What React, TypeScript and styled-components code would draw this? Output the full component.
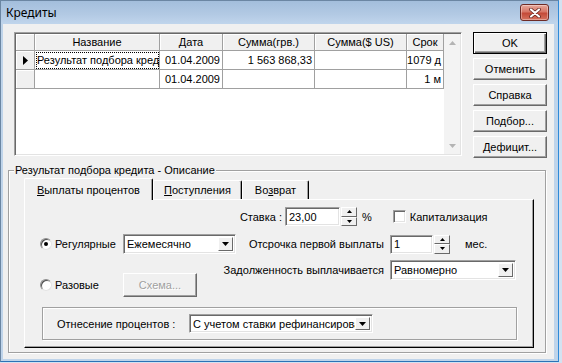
import styled, { createGlobalStyle } from "styled-components";

const GlobalStyle = createGlobalStyle`
	html, body {
		margin: 0;
		padding: 0;
	}
	body {
		background: #d3e2f1;
		font-family: "Liberation Sans", Arial, sans-serif;
		font-size: 11px;
		color: #000;
	}
`;

const Window = styled.div`
	width: 559px;
	height: 362px;
	box-sizing: border-box;
	display: flex;
	flex-direction: column;
	background: #bfd4ea;
	border: 1px solid #6b86a3;
	border-right-color: #2f8ad8;
	border-bottom-color: #2b72b5;
`;

const TitleBar = styled.div`
	height: 23px;
	display: flex;
	align-items: center;
	padding-left: 5px;
	background: linear-gradient(180deg, #a3bedc 0%, #b3cae4 60%, #c0d5ec 100%);
`;

const Title = styled.span`
	font-family: "Noto Sans", "Liberation Sans", sans-serif;
	font-size: 12px;
	color: #000;
`;

const CloseButton = styled.div`
	margin-left: auto;
	margin-right: 9px;
	width: 29px;
	height: 17px;
	box-sizing: border-box;
	border: 1px solid #6e2b25;
	border-radius: 3px;
	background: linear-gradient(180deg, #e7a99c 0%, #d77666 45%, #c44a38 55%, #d6735f 100%);
	box-shadow: inset 0 0 0 1px rgba(255, 255, 255, 0.35);
	display: flex;
	align-items: center;
	justify-content: center;
`;

const Client = styled.div`
	flex: 1;
	margin: 0 4px 2px 2px;
	background: #f0f0f0;
	display: flex;
	flex-direction: column;
`;

const TopSection = styled.div`
	display: flex;
	gap: 11px;
	padding: 8px 0 0 11px;
`;

const GridBox = styled.div`
	width: 448px;
	height: 124px;
	box-sizing: border-box;
	padding: 1px;
	display: flex;
	background: #fff;
	border: 1px solid;
	border-color: #a0a0a0 #fff #fff #a0a0a0;
	box-shadow: inset 1px 1px 0 #696969, inset -1px -1px 0 #e3e3e3;
`;

const Table = styled.div`
	display: grid;
	grid-template-columns: 19px 125px 63px 92px 92px 37px;
	grid-template-rows: 17px 19px 19px;
	align-content: start;
	width: 428px;
`;

const HeadCell = styled.div`
	box-sizing: border-box;
	background: #f0f0f0;
	border-right: 1px solid #a0a0a0;
	border-bottom: 1px solid #a0a0a0;
	box-shadow: inset 1px 1px 0 #fff;
	display: flex;
	align-items: center;
	justify-content: center;
	white-space: nowrap;
	overflow: hidden;
`;

const Cell = styled.div<{ $align?: "left" | "right"; $focus?: boolean }>`
	box-sizing: border-box;
	background: #fff;
	border-right: 1px solid #a0a0a0;
	border-bottom: 1px solid #a0a0a0;
	padding: 0 2px;
	display: flex;
	align-items: center;
	justify-content: ${(p) => (p.$align === "right" ? "flex-end" : "flex-start")};
	white-space: nowrap;
	overflow: hidden;
	outline: ${(p) => (p.$focus ? "1px dotted #000" : "none")};
	outline-offset: -2px;
`;

const ScrollBar = styled.div`
	width: 16px;
	display: flex;
	flex-direction: column;
	justify-content: space-between;
	background: #f3f3f3;
`;

const ScrollArrow = styled.div`
	height: 17px;
	display: flex;
	align-items: center;
	justify-content: center;
`;

const ButtonColumn = styled.div`
	display: flex;
	flex-direction: column;
	gap: 4px;
`;

const Button = styled.button<{ $default?: boolean; $width?: number; $height?: number }>`
	width: ${(p) => p.$width ?? 74}px;
	height: ${(p) => p.$height ?? 22}px;
	padding: 0;
	font: inherit;
	color: ${(p) => (p.disabled ? "#a0a0a0" : "#000")};
	text-shadow: ${(p) => (p.disabled ? "1px 1px 0 #fff" : "none")};
	background: #f0f0f0;
	border: 1px solid;
	border-color: ${(p) => (p.$default ? "#000" : "#fff #696969 #696969 #fff")};
	box-shadow: ${(p) =>
		p.$default
			? "inset 1px 1px 0 #fff, inset -1px -1px 0 #696969, inset -2px -2px 0 #a0a0a0"
			: "inset -1px -1px 0 #a0a0a0"};
`;

const GroupBox = styled.div`
	position: relative;
	margin: 12px 8px 0 5px;
	height: 183px;
	box-sizing: border-box;
	padding: 7px 11px 4px 15px;
	border: 1px solid #a0a0a0;
	box-shadow: inset 1px 1px 0 #fff, 1px 1px 0 #fff;
	display: flex;
	flex-direction: column;
`;

const GroupCaption = styled.span`
	position: absolute;
	top: -7px;
	left: 5px;
	padding: 0 1px;
	line-height: 13px;
	background: #f0f0f0;
`;

const TabStrip = styled.div`
	display: flex;
	align-items: flex-end;
	height: 22px;
	margin-bottom: -1px;
	position: relative;
	z-index: 1;
`;

const Tab = styled.div<{ $active?: boolean; $width: number }>`
	width: ${(p) => p.$width}px;
	height: ${(p) => (p.$active ? 22 : 19)}px;
	margin-bottom: ${(p) => (p.$active ? 0 : 1)}px;
	box-sizing: border-box;
	background: #f0f0f0;
	border-top: 1px solid #fff;
	border-left: 1px solid #fff;
	border-right: 1px solid #000;
	border-radius: 2px 2px 0 0;
	box-shadow: inset -1px 0 0 #a0a0a0;
	display: flex;
	align-items: center;
	justify-content: center;
	white-space: nowrap;
`;

const Key = styled.span`
	text-decoration: underline;
`;

const Sheet = styled.div`
	flex: 1;
	box-sizing: border-box;
	border-top: 1px solid #fff;
	border-left: 1px solid #fff;
	border-right: 1px solid #000;
	border-bottom: 1px solid #000;
	box-shadow: inset -1px -1px 0 #a0a0a0;
	padding: 7px 16px 0 15px;
	display: flex;
	flex-direction: column;
`;

const RateRow = styled.div`
	height: 19px;
	display: flex;
	align-items: center;
`;

const RateLabel = styled.span`
	width: 242px;
	margin-right: 3px;
	text-align: right;
`;

const Edit = styled.div<{ $width: number; $height?: number }>`
	width: ${(p) => p.$width}px;
	height: ${(p) => p.$height ?? 19}px;
	box-sizing: border-box;
	background: #fff;
	border: 1px solid;
	border-color: #a0a0a0 #fff #fff #a0a0a0;
	box-shadow: inset 1px 1px 0 #696969, inset -1px -1px 0 #e3e3e3;
	padding: 0 3px;
	display: flex;
	align-items: center;
	white-space: nowrap;
	overflow: hidden;
	flex-shrink: 0;
`;

const Spin = styled.div`
	width: 16px;
	height: 19px;
	margin-left: 1px;
	display: flex;
	flex-direction: column;
	flex-shrink: 0;
`;

const SpinPart = styled.div`
	flex: 1;
	box-sizing: border-box;
	background: #f0f0f0;
	border: 1px solid;
	border-color: #fff #696969 #696969 #fff;
	display: flex;
	align-items: center;
	justify-content: center;
`;

const Combo = styled.div<{ $width: number; $height?: number }>`
	width: ${(p) => p.$width}px;
	height: ${(p) => p.$height ?? 20}px;
	box-sizing: border-box;
	background: #fff;
	border: 1px solid;
	border-color: #a0a0a0 #fff #fff #a0a0a0;
	box-shadow: inset 1px 1px 0 #696969, inset -1px -1px 0 #e3e3e3;
	padding: 2px 2px 2px 3px;
	display: flex;
	align-items: center;
	flex-shrink: 0;
`;

const ComboText = styled.span`
	flex: 1;
	white-space: nowrap;
	overflow: hidden;
`;

const ComboButton = styled.div`
	width: 15px;
	align-self: stretch;
	box-sizing: border-box;
	background: #f0f0f0;
	border: 1px solid;
	border-color: #fff #696969 #696969 #fff;
	display: flex;
	align-items: center;
	justify-content: center;
`;

const Unit = styled.span<{ $gap: number }>`
	margin-left: ${(p) => p.$gap}px;
	white-space: nowrap;
`;

const CheckBox = styled.span`
	width: 13px;
	height: 13px;
	box-sizing: border-box;
	margin: 0 4px 0 21px;
	background: #fff;
	border: 1px solid;
	border-color: #a0a0a0 #fff #fff #a0a0a0;
	box-shadow: inset 1px 1px 0 #696969, inset -1px -1px 0 #e3e3e3;
`;

const Middle = styled.div`
	display: flex;
	margin-top: 8px;
`;

const LeftColumn = styled.div`
	width: 196px;
	display: flex;
	flex-direction: column;
`;

const OptionRow = styled.div<{ $height: number; $top?: number }>`
	height: ${(p) => p.$height}px;
	margin-top: ${(p) => p.$top ?? 0}px;
	display: flex;
	align-items: center;
`;

const OptionLabel = styled.label`
	width: 83px;
	display: flex;
	align-items: center;
	gap: 3px;
	white-space: nowrap;
	flex-shrink: 0;
`;

const Radio = styled.span<{ $checked?: boolean }>`
	width: 12px;
	height: 12px;
	box-sizing: border-box;
	border-radius: 50%;
	background: #fff;
	border: 1px solid;
	border-color: #8d8d8d #e3e3e3 #e3e3e3 #8d8d8d;
	box-shadow: inset 1px 1px 0 #505050;
	display: flex;
	align-items: center;
	justify-content: center;
	&::after {
		content: "";
		width: 4px;
		height: 4px;
		border-radius: 50%;
		background: ${(p) => (p.$checked ? "#000" : "transparent")};
	}
`;

const RightColumn = styled.div`
	width: 280px;
	display: flex;
	flex-direction: column;
	gap: 6px;
`;

const FieldRow = styled.div`
	height: 20px;
	display: flex;
	justify-content: flex-end;
	align-items: center;
`;

const FieldLabel = styled.span`
	white-space: nowrap;
	flex-shrink: 0;
`;

const FieldSlot = styled.div`
	width: 126px;
	margin-left: 6px;
	display: flex;
	align-items: center;
	flex-shrink: 0;
`;

const Panel = styled.div`
	margin: 10px 0 0 2px;
	height: 33px;
	box-sizing: border-box;
	border: 1px solid #a0a0a0;
	box-shadow: inset 1px 1px 0 #fff, 1px 1px 0 #fff;
	padding-left: 14px;
	display: flex;
	align-items: center;
`;

const PanelLabel = styled.span`
	width: 132px;
	white-space: nowrap;
`;

const DropArrow = () => (
	<svg width="7" height="4" viewBox="0 0 7 4">
		<path d="M0 0h7L3.5 4z" fill="#000" />
	</svg>
);

const SpinArrow = ({ up }: { up?: boolean }) => (
	<svg width="5" height="3" viewBox="0 0 5 3">
		<path d={up ? "M0 3h5L2.5 0z" : "M0 0h5L2.5 3z"} fill="#000" />
	</svg>
);

const SpinBox = () => (
	<Spin>
		<SpinPart>
			<SpinArrow up />
		</SpinPart>
		<SpinPart>
			<SpinArrow />
		</SpinPart>
	</Spin>
);

const ComboBox = ({ width, height, text }: { width: number; height?: number; text: string }) => (
	<Combo $width={width} $height={height}>
		<ComboText>{text}</ComboText>
		<ComboButton>
			<DropArrow />
		</ComboButton>
	</Combo>
);

const rows = [
	{ name: "Результат подбора кредита", date: "01.04.2009", uah: "1 563 868,33", usd: "", term: "1079 д", current: true },
	{ name: "", date: "01.04.2009", uah: "", usd: "", term: "1 м", current: false },
];

const App = () => {
	return (
		<>
			<GlobalStyle />
			<Window>
				<TitleBar>
					<Title>Кредиты</Title>
					<CloseButton>
						<svg width="12" height="10" viewBox="0 0 12 10">
							<path
								d="M2 1.5L10 8.5M10 1.5L2 8.5"
								stroke="#5a1d17"
								strokeWidth="3.6"
								strokeLinecap="round"
							/>
							<path d="M2 1.5L10 8.5M10 1.5L2 8.5" stroke="#fff" strokeWidth="2.2" strokeLinecap="round" />
						</svg>
					</CloseButton>
				</TitleBar>
				<Client>
					<TopSection>
						<GridBox>
							<Table>
								<HeadCell />
								<HeadCell>Название</HeadCell>
								<HeadCell>Дата</HeadCell>
								<HeadCell>Сумма(грв.)</HeadCell>
								<HeadCell>Сумма($ US)</HeadCell>
								<HeadCell>Срок</HeadCell>
								{rows.map((r, i) => (
									<>
										<HeadCell key={`i${i}`}>
											{r.current && (
												<svg width="5" height="9" viewBox="0 0 5 9">
													<path d="M0 0L5 4.5L0 9z" fill="#000" />
												</svg>
											)}
										</HeadCell>
										<Cell key={`n${i}`} $focus={r.current}>
											{r.name}
										</Cell>
										<Cell key={`d${i}`} $align="right">
											{r.date}
										</Cell>
										<Cell key={`u${i}`} $align="right">
											{r.uah}
										</Cell>
										<Cell key={`s${i}`} $align="right">
											{r.usd}
										</Cell>
										<Cell key={`t${i}`} $align="right">
											{r.term}
										</Cell>
									</>
								))}
							</Table>
							<ScrollBar>
								<ScrollArrow>
									<svg width="7" height="4" viewBox="0 0 7 4">
										<path d="M0 4h7L3.5 0z" fill="#b4b4b4" />
									</svg>
								</ScrollArrow>
								<ScrollArrow>
									<svg width="7" height="4" viewBox="0 0 7 4">
										<path d="M0 0h7L3.5 4z" fill="#b4b4b4" />
									</svg>
								</ScrollArrow>
							</ScrollBar>
						</GridBox>
						<ButtonColumn>
							<Button $default>OK</Button>
							<Button>Отменить</Button>
							<Button>Справка</Button>
							<Button>Подбор...</Button>
							<Button>Дефицит...</Button>
						</ButtonColumn>
					</TopSection>

					<GroupBox>
						<GroupCaption>Результат подбора кредита - Описание</GroupCaption>
						<TabStrip>
							<Tab $active $width={129}>
								<span>
									<Key>В</Key>ыплаты процентов
								</span>
							</Tab>
							<Tab $width={89}>
								<span>
									<Key>П</Key>оступления
								</span>
							</Tab>
							<Tab $width={67}>
								<span>
									Во<Key>з</Key>врат
								</span>
							</Tab>
						</TabStrip>
						<Sheet>
							<RateRow>
								<RateLabel>Ставка :</RateLabel>
								<Edit $width={55}>23,00</Edit>
								<SpinBox />
								<Unit $gap={5}>%</Unit>
								<CheckBox />
								<span>Капитализация</span>
							</RateRow>
							<Middle>
								<LeftColumn>
									<OptionRow $height={20}>
										<OptionLabel>
											<Radio $checked />
											Регулярные
										</OptionLabel>
										<ComboBox width={113} text="Ежемесячно" />
									</OptionRow>
									<OptionRow $height={24} $top={19}>
										<OptionLabel>
											<Radio />
											Разовые
										</OptionLabel>
										<Button disabled $height={24}>
											Схема...
										</Button>
									</OptionRow>
								</LeftColumn>
								<RightColumn>
									<FieldRow>
										<FieldLabel>Отсрочка первой выплаты</FieldLabel>
										<FieldSlot>
											<Edit $width={43}>1</Edit>
											<SpinBox />
											<Unit $gap={15}>мес.</Unit>
										</FieldSlot>
									</FieldRow>
									<FieldRow>
										<FieldLabel>Задолженность выплачивается</FieldLabel>
										<FieldSlot>
											<ComboBox width={126} text="Равномерно" />
										</FieldSlot>
									</FieldRow>
								</RightColumn>
							</Middle>
							<Panel>
								<PanelLabel>Отнесение процентов :</PanelLabel>
								<ComboBox width={184} height={19} text="С учетом ставки рефинансирования" />
							</Panel>
						</Sheet>
					</GroupBox>
				</Client>
			</Window>
		</>
	);
};

export default App;
